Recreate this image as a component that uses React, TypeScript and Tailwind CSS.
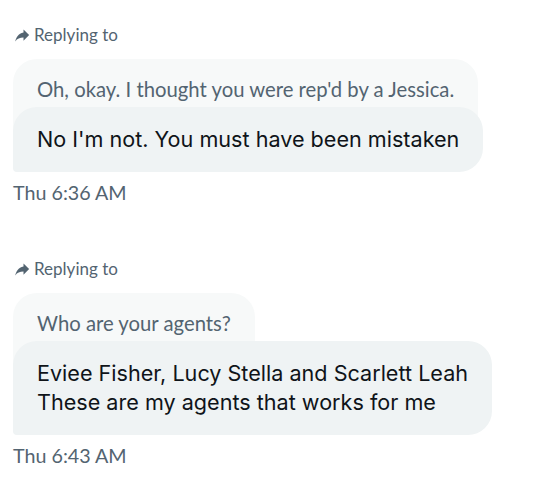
const thread = [
  {
    quoted: "Oh, okay. I thought you were rep'd by a Jessica.",
    lines: ["No I'm not. You must have been mistaken"],
    time: 'Thu 6:36 AM',
  },
  {
    quoted: 'Who are your agents?',
    lines: ['Eviee Fisher, Lucy Stella and Scarlett Leah', 'These are my agents that works for me'],
    time: 'Thu 6:43 AM',
  },
];

function ReplyIcon() {
  return (
    <svg viewBox="0 0 24 24" className="h-[18px] w-[18px] fill-[#536471]">
      <path d="M14 8.5V4.5l7.5 7.5-7.5 7.5v-4.1c-5 0-8.5 1.6-11 5.1 1-5 4-10.5 11-12z" />
    </svg>
  );
}

export default function App() {
  return (
    <div className="min-h-screen bg-white pl-[13px] pt-[24px] font-['Lato','Noto_Sans',sans-serif]">
      {thread.map((msg, i) => (
        <div key={i} className={i > 0 ? 'mt-[53px]' : ''}>
          <div className="flex h-[22px] items-center gap-[3px] text-[17px] text-[#536471]">
            <ReplyIcon />
            <span>Replying to</span>
          </div>

          <div className="mt-[13px] flex flex-col items-start">
            <div className="rounded-t-[24px] bg-[#f7f9f9] px-[24px] pb-[31px] pt-[17px] text-[20.3px] leading-[26px] text-[#536471]">
              {msg.quoted}
            </div>
            <div className="-mt-[26px] rounded-[24px] rounded-bl-[4px] bg-[#eff3f4] px-[24px] py-[18px] font-['Inter',sans-serif] text-[21.6px] leading-[29px] text-[#0f1419]">
              {msg.lines.map((l, j) => (
                <div key={j}>{l}</div>
              ))}
            </div>
          </div>

          <div className="mt-[9px] text-[19.7px] leading-[24px] text-[#536471]">{msg.time}</div>
        </div>
      ))}
    </div>
  );
}
